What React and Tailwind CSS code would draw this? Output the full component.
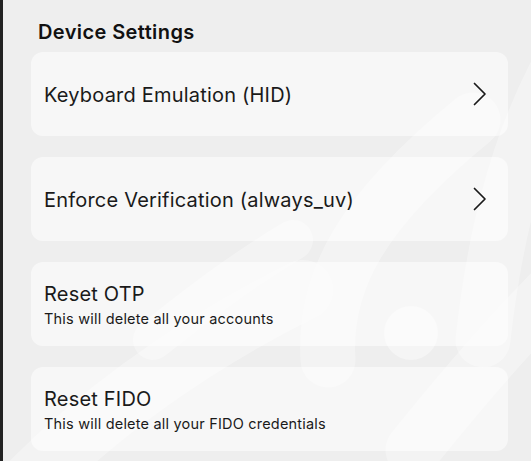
import { useState } from "react";

const rows = [
    { title: "Keyboard Emulation (HID)", arrow: true },
    { title: "Enforce Verification (always_uv)", arrow: true },
    { title: "Reset OTP", sub: "This will delete all your accounts" },
    { title: "Reset FIDO", sub: "This will delete all your FIDO credentials" },
];

function Chevron() {
    return (
        <svg width="14" height="24" viewBox="0 0 14 24" fill="none">
            <path d="M1.5 1.5 L12 12 L1.5 22.5" stroke="#1a1a1a" strokeWidth="1.7" strokeLinecap="round" strokeLinejoin="round" />
        </svg>
    );
}

// faint logo pattern behind the list
function BackgroundShapes() {
    return (
        <svg className="absolute inset-0 pointer-events-none" width="531" height="461" viewBox="0 0 531 461">
            <g stroke="#ffffff" strokeOpacity="0.32" strokeLinecap="round" fill="none">
                <path d="M30 480 C110 400 200 340 300 290" strokeWidth="60" />
                <path d="M325 360 C320 280 360 210 470 120" strokeWidth="55" />
                <path d="M410 450 C450 400 500 340 560 280" strokeWidth="55" />
                <path d="M480 340 C490 250 510 150 560 60" strokeWidth="55" />
                <path d="M150 340 C200 300 240 270 290 240" strokeWidth="40" />
            </g>
            <circle cx="408" cy="333" r="27" fill="#ffffff" fillOpacity="0.4" />
        </svg>
    );
}

export default function App() {
    const [selected, setSelected] = useState(null);

    return (
        <div className="flex h-[461px] w-[531px] overflow-hidden bg-[#eeeeee]" style={{ fontFamily: "Inter, 'Noto Sans', sans-serif" }}>
            <div className="w-[3px] bg-[#222222]"></div>
            <div className="relative flex-1 pl-[28px] pr-[23px]">
                <BackgroundShapes />

                <h2 className="relative mt-[20px] ml-[7px] h-[32px] text-[20px] font-semibold leading-[24px] tracking-[0.4px] text-[#111111]">
                    Device Settings
                </h2>

                <div className="relative flex flex-col gap-[21px]">
                    {rows.map((row, i) => (
                        <div
                            key={row.title}
                            onClick={() => setSelected(i)}
                            className={`flex h-[84px] items-center justify-between rounded-[12px] pl-[13px] pr-[21px] ${selected === i ? "bg-white/80" : "bg-white/55"}`}
                        >
                            <div className="flex flex-col pt-[1px]">
                                <span className="text-[20px] leading-[28px] tracking-[0.2px] text-[#1a1a1a]">{row.title}</span>
                                {row.sub && (
                                    <span className="text-[14.5px] leading-[21px] tracking-[0.2px] text-[#1a1a1a]">{row.sub}</span>
                                )}
                            </div>
                            {row.arrow && <Chevron />}
                        </div>
                    ))}
                </div>
            </div>
        </div>
    );
}
